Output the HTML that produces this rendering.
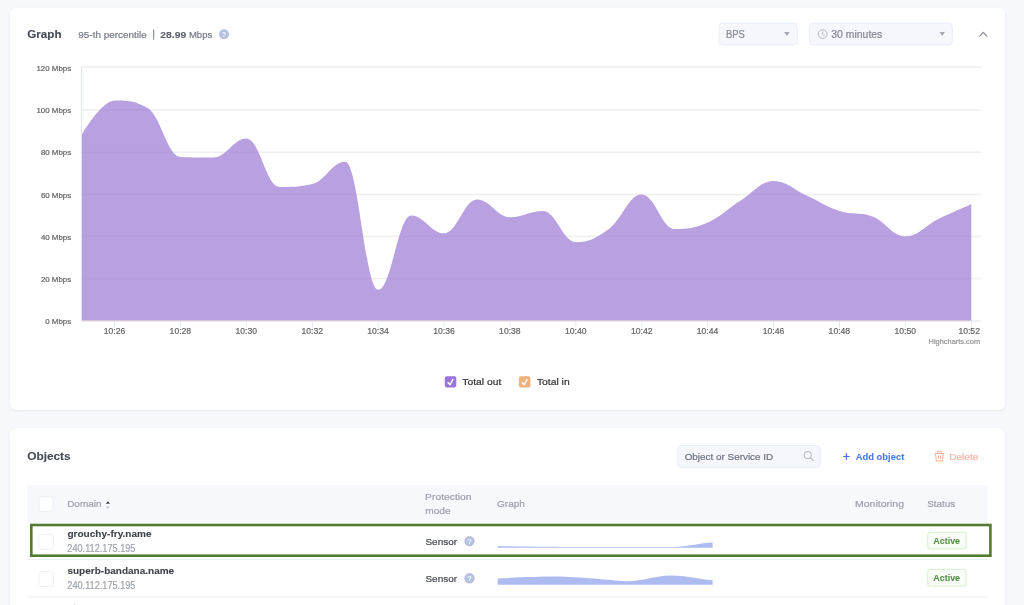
<!DOCTYPE html>
<html><head><meta charset="utf-8"><title>Graph</title>
<style>
html,body{margin:0;padding:0;}
body{width:1024px;height:605px;overflow:hidden;background:#f7f8fb;position:relative;font-family:"Liberation Sans", sans-serif;}
.card{position:absolute;left:10px;width:995px;background:#fff;border-radius:6px;box-shadow:0 1px 3px rgba(30,40,80,0.075);}
.box{position:absolute;box-sizing:border-box;}
svg{position:absolute;left:0;top:0;font-family:"Liberation Sans", sans-serif;will-change:transform;}
</style></head>
<body>
<div class="card" style="top:8px;height:402px"></div>
<div class="card" style="top:427.6px;height:200px"></div>
<svg width="1024" height="605" viewBox="0 0 1024 605">
<rect x="27.1" y="485.5" width="960.6" height="37.1" rx="0" fill="#f7f8fc"/>
<rect x="719.20" y="23.20" width="78.10" height="21.80" rx="3.50" fill="#f5f7fc" stroke="#e8edf9" stroke-width="1"/>
<rect x="809.60" y="23.20" width="142.70" height="21.80" rx="3.50" fill="#f5f7fc" stroke="#e8edf9" stroke-width="1"/>
<rect x="677.80" y="445.50" width="142.50" height="21.80" rx="3.50" fill="#f5f7fc" stroke="#e8edf9" stroke-width="1"/>
<rect x="39.00" y="496.80" width="14.20" height="14.80" rx="2.50" fill="#ffffff" stroke="#eceef3" stroke-width="1"/>
<rect x="38.90" y="534.40" width="14.60" height="14.90" rx="2.50" fill="#ffffff" stroke="#eff0f4" stroke-width="1"/>
<rect x="38.90" y="571.60" width="14.60" height="14.90" rx="2.50" fill="#ffffff" stroke="#eff0f4" stroke-width="1"/>
<rect x="27.2" y="559.0" width="960.5" height="1" rx="0" fill="#eceef2"/>
<rect x="27.2" y="596.5" width="960.5" height="1" rx="0" fill="#eceef2"/>
<rect x="927.70" y="532.30" width="38.40" height="16.60" rx="2.40" fill="#f8fef6" stroke="#dcf3d3" stroke-width="1.2"/>
<rect x="927.70" y="569.50" width="38.40" height="16.60" rx="2.40" fill="#f8fef6" stroke="#dcf3d3" stroke-width="1.2"/>
<text transform="translate(27.23 37.7) scale(0.989 1)" font-size="11.8" fill="#434956" stroke="#434956" stroke-width="0.1" font-weight="700">Graph</text>
<text transform="translate(78.33 37.6) scale(1.013 1)" font-size="9.8" fill="#777c88" stroke="#777c88" stroke-width="0.22" font-weight="400">95-th percentile</text>
<rect x="153.2" y="29.6" width="1" height="10" fill="#747985"/>
<text transform="translate(160.34 37.6) scale(1.057 1)" font-size="9.8" fill="#5a5f6b" stroke="#5a5f6b" stroke-width="0.1" font-weight="700">28.99</text>
<text transform="translate(188.91 37.6) scale(0.973 1)" font-size="9.8" fill="#777c88" stroke="#777c88" stroke-width="0.22" font-weight="400">Mbps</text>
<circle cx="224.0" cy="34.3" r="5.0" fill="#b7c1df"/>
<text transform="translate(222.04 37.0) scale(1.000 1)" font-size="7.0" fill="#f4f6fc" stroke="#f4f6fc" stroke-width="0.22" font-weight="400">?</text>
<text transform="translate(726.02 37.8) scale(0.931 1)" font-size="10.1" fill="#858a95" stroke="#858a95" stroke-width="0.22" font-weight="400">BPS</text>
<path d="M784.1 32 L789.7 32 L786.9 36 Z" fill="#a3a7b2"/>
<circle cx="822.7" cy="34.1" r="4.4" fill="none" stroke="#b3b7c2" stroke-width="1"/>
<path d="M822.7 31.3 V34.3 L824.6 35.9" fill="none" stroke="#b3b7c2" stroke-width="1"/>
<text transform="translate(831.21 37.8) scale(1.037 1)" font-size="10.1" fill="#858a95" stroke="#858a95" stroke-width="0.22" font-weight="400">30 minutes</text>
<path d="M939.6 32 L944.9 32 L942.25 36 Z" fill="#a3a7b2"/>
<path d="M979.3 36.6 L983.3 32.4 L987.3 36.6" fill="none" stroke="#8d929e" stroke-width="1.3"/>
<rect x="82" y="277.80" width="899" height="1.6" fill="#efefef"/>
<rect x="82" y="235.60" width="899" height="1.6" fill="#efefef"/>
<rect x="82" y="193.70" width="899" height="1.6" fill="#efefef"/>
<rect x="82" y="151.50" width="899" height="1.6" fill="#efefef"/>
<rect x="82" y="109.20" width="899" height="1.6" fill="#efefef"/>
<rect x="82" y="66.20" width="899" height="1.6" fill="#efefef"/>
<path d="M81.65 135.00 C81.65 135.00 101.42 100.50 114.60 100.50 C127.78 100.50 134.37 100.50 147.55 108.00 C160.73 115.50 167.32 156.50 180.50 157.00 C193.68 157.50 200.27 157.50 213.45 157.50 C226.63 157.50 233.22 138.50 246.40 138.50 C259.58 138.50 266.17 187.00 279.35 187.00 C292.53 187.00 299.12 187.00 312.30 184.00 C325.48 181.00 332.07 161.70 345.25 161.70 C358.43 161.70 365.02 289.80 378.20 289.80 C391.38 289.80 397.97 215.40 411.15 215.40 C424.33 215.40 430.92 233.30 444.10 233.30 C457.28 233.30 463.87 199.50 477.05 199.50 C490.23 199.50 496.82 217.20 510.00 217.20 C523.18 217.20 529.77 211.00 542.95 211.00 C556.13 211.00 562.72 242.20 575.90 242.20 C589.08 242.20 595.67 238.54 608.85 229.00 C622.03 219.46 628.62 194.50 641.80 194.50 C654.98 194.50 661.57 229.10 674.75 229.10 C687.93 229.10 694.52 228.22 707.70 222.50 C720.88 216.78 727.47 208.80 740.65 200.50 C753.83 192.20 760.42 181.00 773.60 181.00 C786.78 181.00 793.37 189.50 806.55 195.50 C819.73 201.50 826.32 206.80 839.50 211.00 C852.68 215.20 859.27 211.42 872.45 216.50 C885.63 221.58 892.22 236.40 905.40 236.40 C918.58 236.40 925.17 225.44 938.35 219.00 C951.53 212.56 971.30 204.20 971.30 204.20 L971.30 321.0 L81.65 321.0 Z" fill="#a280d7" fill-opacity="0.75"/>
<rect x="81.65" y="320" width="889.7" height="1" fill="#e8a070" fill-opacity="0.35"/>
<rect x="80.9" y="66.5" width="1" height="254.5" fill="#dfe4f3"/>
<rect x="81" y="320.5" width="900" height="1" fill="#dfe4f3"/>
<text transform="translate(45.26 324.4) scale(1.000 1)" font-size="7.9" fill="#666666" stroke="#666666" stroke-width="0.22" font-weight="400">0 Mbps</text>
<text transform="translate(40.88 282.2) scale(1.000 1)" font-size="7.9" fill="#666666" stroke="#666666" stroke-width="0.22" font-weight="400">20 Mbps</text>
<text transform="translate(40.88 239.9) scale(1.000 1)" font-size="7.9" fill="#666666" stroke="#666666" stroke-width="0.22" font-weight="400">40 Mbps</text>
<text transform="translate(40.88 197.7) scale(1.000 1)" font-size="7.9" fill="#666666" stroke="#666666" stroke-width="0.22" font-weight="400">60 Mbps</text>
<text transform="translate(40.88 155.1) scale(1.000 1)" font-size="7.9" fill="#666666" stroke="#666666" stroke-width="0.22" font-weight="400">80 Mbps</text>
<text transform="translate(36.48 112.6) scale(1.000 1)" font-size="7.9" fill="#666666" stroke="#666666" stroke-width="0.22" font-weight="400">100 Mbps</text>
<text transform="translate(36.48 70.8) scale(1.000 1)" font-size="7.9" fill="#666666" stroke="#666666" stroke-width="0.22" font-weight="400">120 Mbps</text>
<rect x="114.10" y="321" width="1" height="6.5" fill="#e3e7f3"/>
<text transform="translate(103.70 334.2) scale(1.000 1)" font-size="8.6" fill="#666666" stroke="#666666" stroke-width="0.22" font-weight="400">10:26</text>
<rect x="180.00" y="321" width="1" height="6.5" fill="#e3e7f3"/>
<text transform="translate(169.60 334.2) scale(1.000 1)" font-size="8.6" fill="#666666" stroke="#666666" stroke-width="0.22" font-weight="400">10:28</text>
<rect x="245.90" y="321" width="1" height="6.5" fill="#e3e7f3"/>
<text transform="translate(235.48 334.2) scale(1.000 1)" font-size="8.6" fill="#666666" stroke="#666666" stroke-width="0.22" font-weight="400">10:30</text>
<rect x="311.80" y="321" width="1" height="6.5" fill="#e3e7f3"/>
<text transform="translate(301.43 334.2) scale(1.000 1)" font-size="8.6" fill="#666666" stroke="#666666" stroke-width="0.22" font-weight="400">10:32</text>
<rect x="377.70" y="321" width="1" height="6.5" fill="#e3e7f3"/>
<text transform="translate(367.24 334.2) scale(1.000 1)" font-size="8.6" fill="#666666" stroke="#666666" stroke-width="0.22" font-weight="400">10:34</text>
<rect x="443.60" y="321" width="1" height="6.5" fill="#e3e7f3"/>
<text transform="translate(433.20 334.2) scale(1.000 1)" font-size="8.6" fill="#666666" stroke="#666666" stroke-width="0.22" font-weight="400">10:36</text>
<rect x="509.50" y="321" width="1" height="6.5" fill="#e3e7f3"/>
<text transform="translate(499.10 334.2) scale(1.000 1)" font-size="8.6" fill="#666666" stroke="#666666" stroke-width="0.22" font-weight="400">10:38</text>
<rect x="575.40" y="321" width="1" height="6.5" fill="#e3e7f3"/>
<text transform="translate(564.98 334.2) scale(1.000 1)" font-size="8.6" fill="#666666" stroke="#666666" stroke-width="0.22" font-weight="400">10:40</text>
<rect x="641.30" y="321" width="1" height="6.5" fill="#e3e7f3"/>
<text transform="translate(630.93 334.2) scale(1.000 1)" font-size="8.6" fill="#666666" stroke="#666666" stroke-width="0.22" font-weight="400">10:42</text>
<rect x="707.20" y="321" width="1" height="6.5" fill="#e3e7f3"/>
<text transform="translate(696.74 334.2) scale(1.000 1)" font-size="8.6" fill="#666666" stroke="#666666" stroke-width="0.22" font-weight="400">10:44</text>
<rect x="773.10" y="321" width="1" height="6.5" fill="#e3e7f3"/>
<text transform="translate(762.70 334.2) scale(1.000 1)" font-size="8.6" fill="#666666" stroke="#666666" stroke-width="0.22" font-weight="400">10:46</text>
<rect x="839.00" y="321" width="1" height="6.5" fill="#e3e7f3"/>
<text transform="translate(828.60 334.2) scale(1.000 1)" font-size="8.6" fill="#666666" stroke="#666666" stroke-width="0.22" font-weight="400">10:48</text>
<rect x="904.90" y="321" width="1" height="6.5" fill="#e3e7f3"/>
<text transform="translate(894.48 334.2) scale(1.000 1)" font-size="8.6" fill="#666666" stroke="#666666" stroke-width="0.22" font-weight="400">10:50</text>
<rect x="970.80" y="321" width="1" height="6.5" fill="#e3e7f3"/>
<text transform="translate(958.41 334.2) scale(1.000 1)" font-size="8.6" fill="#666666" stroke="#666666" stroke-width="0.22" font-weight="400">10:52</text>
<text transform="translate(928.59 344.2) scale(1.094 1)" font-size="6.8" fill="#999999" stroke="#999999" stroke-width="0.22" font-weight="400">Highcharts.com</text>
<rect x="444.8" y="376.2" width="11.5" height="11.2" rx="1.8" fill="#9e73d9"/>
<path d="M447.6 382.2 L450.1 384.6 L453.1 379.2" fill="none" stroke="#fff" stroke-width="1.5"/>
<text transform="translate(462.37 384.9) scale(1.084 1)" font-size="9.5" fill="#333333" stroke="#333333" stroke-width="0.22" font-weight="400">Total out</text>
<rect x="518.9" y="376.2" width="11.5" height="11.2" rx="1.8" fill="#efb17b"/>
<path d="M521.7 382.2 L524.2 384.6 L527.2 379.2" fill="none" stroke="#fff" stroke-width="1.5"/>
<text transform="translate(536.97 384.9) scale(1.087 1)" font-size="9.5" fill="#333333" stroke="#333333" stroke-width="0.22" font-weight="400">Total in</text>
<text transform="translate(27.23 460.1) scale(1.002 1)" font-size="11.8" fill="#434956" stroke="#434956" stroke-width="0.1" font-weight="700">Objects</text>
<text transform="translate(684.63 459.9) scale(1.021 1)" font-size="9.7" fill="#6f7480" stroke="#6f7480" stroke-width="0.22" font-weight="400">Object or Service ID</text>
<circle cx="807.75" cy="455.0" r="3.5" fill="none" stroke="#b6bac5" stroke-width="1.05"/>
<path d="M810.3 457.6 L813.2 460.5" stroke="#b6bac5" stroke-width="1.1" stroke-linecap="round"/>
<path d="M843.1 456.5 H849.7 M846.4 453.2 V459.8" stroke="#4673d4" stroke-width="1.2"/>
<text transform="translate(855.66 459.8) scale(0.961 1)" font-size="9.8" fill="#4d7bd9" stroke="#4d7bd9" stroke-width="0.1" font-weight="700">Add object</text>
<g fill="none" stroke="#f3b0a2" stroke-width="1"><path d="M934.6 453.5 H944.2"/><path d="M937.4 453.4 V451.7 H941.4 V453.4"/><path d="M935.4 453.8 L936.4 461.0 H942.4 L943.4 453.8"/><path d="M938.5 455.4 V458.8 M940.6 455.4 V458.8"/></g>
<text transform="translate(949.17 459.9) scale(1.030 1)" font-size="9.8" fill="#f4b5a8" stroke="#f4b5a8" stroke-width="0.22" font-weight="400">Delete</text>
<text transform="translate(67.18 507.0) scale(1.036 1)" font-size="9.6" fill="#9ea2ac" stroke="#9ea2ac" stroke-width="0.22" font-weight="400">Domain</text>
<path d="M105.9 503.7 L109.9 503.7 L107.9 501.2 Z" fill="#333333"/>
<path d="M106.0 506.6 L109.6 506.6 L107.8 509.0 Z" fill="#bcc0cc"/>
<text transform="translate(425.05 499.8) scale(1.068 1)" font-size="9.7" fill="#9ea2ac" stroke="#9ea2ac" stroke-width="0.22" font-weight="400">Protection</text>
<text transform="translate(425.22 514.3) scale(1.044 1)" font-size="9.7" fill="#9ea2ac" stroke="#9ea2ac" stroke-width="0.22" font-weight="400">mode</text>
<text transform="translate(497.05 507.1) scale(1.032 1)" font-size="9.7" fill="#9ea2ac" stroke="#9ea2ac" stroke-width="0.22" font-weight="400">Graph</text>
<text transform="translate(855.04 507.3) scale(1.092 1)" font-size="9.6" fill="#9ea2ac" stroke="#9ea2ac" stroke-width="0.22" font-weight="400">Monitoring</text>
<text transform="translate(927.15 507.3) scale(1.032 1)" font-size="9.6" fill="#9ea2ac" stroke="#9ea2ac" stroke-width="0.22" font-weight="400">Status</text>
<text transform="translate(67.40 537.0) scale(1.071 1)" font-size="9.4" fill="#3f424a" stroke="#3f424a" stroke-width="0.1" font-weight="700">grouchy-fry.name</text>
<text transform="translate(67.34 551.9) scale(0.918 1)" font-size="10.0" fill="#a0a4ae" stroke="#a0a4ae" stroke-width="0.22" font-weight="400">240.112.175.195</text>
<text transform="translate(425.45 544.9) scale(1.008 1)" font-size="9.9" fill="#484b53" stroke="#484b53" stroke-width="0.22" font-weight="400">Sensor</text>
<circle cx="469.5" cy="541.1" r="5.2" fill="#b7c1df"/>
<text transform="translate(467.48 543.9) scale(1.000 1)" font-size="7.2" fill="#f4f6fc" stroke="#f4f6fc" stroke-width="0.22" font-weight="400">?</text>
<text transform="translate(933.28 543.9) scale(0.961 1)" font-size="9.3" fill="#559346" stroke="#559346" stroke-width="0.1" font-weight="700">Active</text>
<text transform="translate(67.45 574.2) scale(1.065 1)" font-size="9.4" fill="#3f424a" stroke="#3f424a" stroke-width="0.1" font-weight="700">superb-bandana.name</text>
<text transform="translate(67.34 589.1) scale(0.918 1)" font-size="10.0" fill="#a0a4ae" stroke="#a0a4ae" stroke-width="0.22" font-weight="400">240.112.175.195</text>
<text transform="translate(425.45 582.1) scale(1.008 1)" font-size="9.9" fill="#484b53" stroke="#484b53" stroke-width="0.22" font-weight="400">Sensor</text>
<circle cx="469.5" cy="578.3" r="5.2" fill="#b7c1df"/>
<text transform="translate(467.48 581.1) scale(1.000 1)" font-size="7.2" fill="#f4f6fc" stroke="#f4f6fc" stroke-width="0.22" font-weight="400">?</text>
<text transform="translate(933.28 581.1) scale(0.961 1)" font-size="9.3" fill="#559346" stroke="#559346" stroke-width="0.1" font-weight="700">Active</text>
<path d="M497.7 546 C540 547 560 546.9 600 546.9 L675 546.9 C690 546.5 700 543 712.6 542.6 L712.6 547.8 L497.7 547.8 Z" fill="#adbbf0"/>
<path d="M497.7 578.4 C520 577.5 540 576.6 555 576.6 C580 576.8 610 580.5 626 581.2 C645 581 655 575.5 670.5 575.4 C690 575.6 700 579.5 712.6 580 L712.6 584.8 L497.7 584.8 Z" fill="#adbbf0"/>
</svg>
<svg width="1024" height="605" viewBox="0 0 1024 605"><rect x="31.3" y="525" width="959.1" height="30.7" fill="none" stroke="#537b31" stroke-width="2.6"/><rect x="74" y="604" width="1" height="1" fill="#c8c8c8"/></svg>
</body></html>
